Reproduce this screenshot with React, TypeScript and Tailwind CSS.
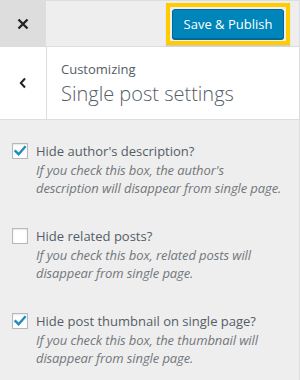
import React from 'react';

const items = [
    {
        label: "Hide author's description?",
        desc: ["If you check this box, the author's", 'description will disappear from single page.'],
        checked: true,
    },
    {
        label: 'Hide related posts?',
        desc: ['If you check this box, related posts will', 'disappear from single page.'],
        checked: false,
    },
    {
        label: 'Hide post thumbnail on single page?',
        desc: ['If you check this box, the thumbnail will', 'disappear from single page.'],
        checked: true,
    },
];

const Checkbox: React.FC<{ checked: boolean }> = ({ checked }) => (
    <div className="w-4 h-4 mt-[2px] shrink-0 bg-white border border-[#b4b9be] shadow-[inset_0_1px_2px_rgba(0,0,0,0.1)] flex items-center justify-center">
        {checked && (
            <svg width="14" height="14" viewBox="0 0 14 14">
                <path d="M2.5 7.2 L5.6 10.2 L11.8 3.2" fill="none" stroke="#1e8cbe" strokeWidth="2.4" strokeLinecap="square" />
            </svg>
        )}
    </div>
);

export default function App() {
    return (
        <div className="w-[300px] h-[380px] overflow-hidden bg-[#eeeeee] border-r border-[#dddddd] font-['Open_Sans',sans-serif] text-[#555d66]">
            {/* header bar */}
            <div className="flex h-[47px] border-t border-b border-[#dddddd] bg-[#eeeeee]">
                <div className="w-[47px] bg-[#dddddd] border-r border-[#eeeeee] flex items-center justify-center">
                    <svg width="12" height="12" viewBox="0 0 12 12">
                        <path d="M1.5 1.5 L10.5 10.5 M10.5 1.5 L1.5 10.5" stroke="#222" strokeWidth="2.3" />
                    </svg>
                </div>
                <div className="flex-1 flex items-start justify-end pt-[2px] pr-[9px]">
                    <div className="border-4 border-[#ffcc00] p-[2px] shadow-[0_1px_1px_rgba(0,0,0,0.15)]">
                        <button className="h-[30px] w-[112px] bg-[#0085ba] border border-[#006799] rounded-[3px] shadow-[0_1px_0_#006799] text-white text-[13px] leading-none">
                            Save &amp; Publish
                        </button>
                    </div>
                </div>
            </div>

            {/* section title */}
            <div className="flex h-[73px] bg-white border-b border-[#dddddd]">
                <div className="w-[47px] border-r border-[#dddddd] flex items-center justify-center">
                    <svg width="10" height="12" viewBox="0 0 10 12">
                        <path d="M7 1.5 L2.8 6 L7 10.5" fill="none" stroke="#222" strokeWidth="2" />
                    </svg>
                </div>
                <div className="pl-[14px] pt-[13px]">
                    <div className="text-[13px] leading-[18px] text-[#555d66]">Customizing</div>
                    <div className="text-[20px] leading-[26px] font-light text-[#555d66] mt-[3px]">Single post settings</div>
                </div>
            </div>

            {/* options */}
            <div className="pl-3 pt-[21px] flex flex-col gap-[29px]">
                {items.map((it) => (
                    <div key={it.label} className="flex gap-2">
                        <Checkbox checked={it.checked} />
                        <div>
                            <div className="text-[13px] leading-[20px] text-[#555d66]">{it.label}</div>
                            {it.desc.map((line) => (
                                <div key={line} className="italic whitespace-nowrap text-[#72777c] text-[13px] tracking-[-0.1px] leading-[18px]">
                                    {line}
                                </div>
                            ))}
                        </div>
                    </div>
                ))}
            </div>
        </div>
    );
}
